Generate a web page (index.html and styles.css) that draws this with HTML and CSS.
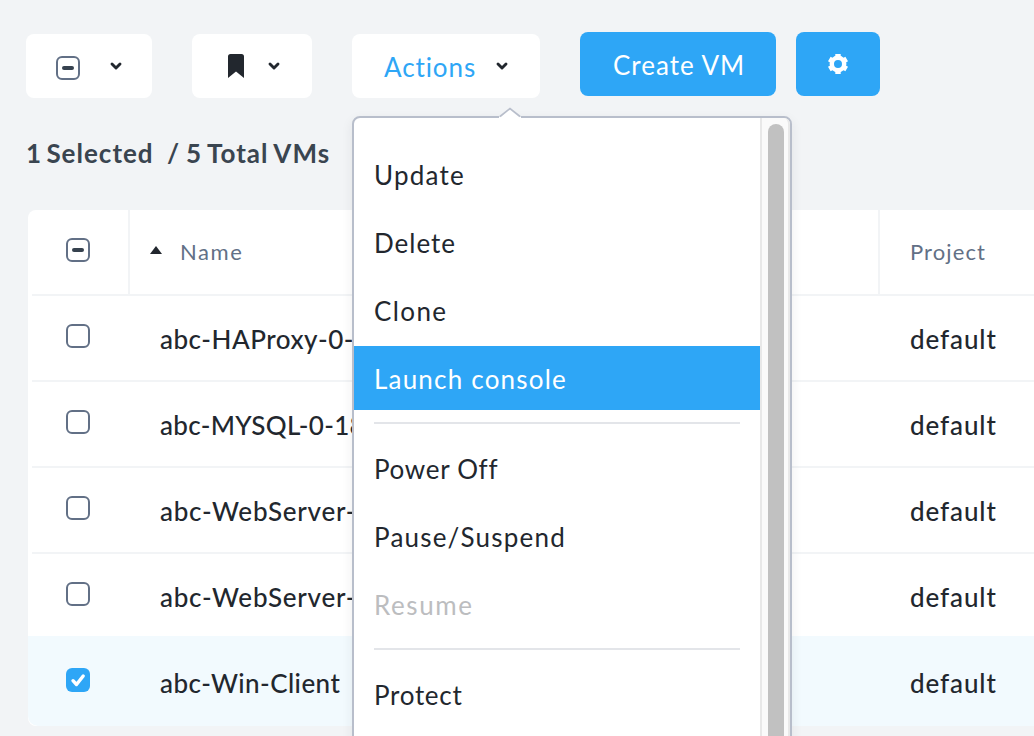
FILE: index.html
```html
<!DOCTYPE html>
<html lang="en">
<head>
<meta charset="utf-8">
<title>VMs</title>
<link rel="stylesheet" href="styles.css">
</head>
<body>
<main class="page">
  <div class="toolbar">
    <button class="btn btn-select"><span class="checkbox mixed"></span><svg class="chevron" viewBox="0 0 14 10"><path d="M3 3l4 4 4-4"/></svg></button>
    <button class="btn btn-bookmark"><svg class="bookmark" viewBox="0 0 16 24"><path d="M2.500 0h11a2.500 2.500 0 0 1 2.500 2.500V24l-8-6.500L0 24V2.500A2.500 2.500 0 0 1 2.500 0z"/></svg><svg class="chevron" viewBox="0 0 14 10"><path d="M3 3l4 4 4-4"/></svg></button>
    <div class="dropdown">
      <button class="btn btn-actions"><span class="t-actions">Actions</span><svg class="chevron" viewBox="0 0 14 10"><path d="M3 3l4 4 4-4"/></svg></button>
      <div class="menu">
        <svg class="menu-arrow" viewBox="0 0 22 11"><path d="M0 9.500L1 9.500 11 1.500 21 9.500 22 9.500V11H0z" fill="#fff"/><path d="M1 9.500L11 1.500 21 9.500" fill="none" stroke="#b8becb" stroke-width="1.700"/></svg>
        <ul class="menu-list">
          <li class="item"><span class="t-update">Update</span></li>
          <li class="item"><span class="t-delete">Delete</span></li>
          <li class="item"><span class="t-clone">Clone</span></li>
          <li class="item active"><span class="t-launch">Launch console</span></li>
          <li class="separator"></li>
          <li class="item"><span class="t-power">Power Off</span></li>
          <li class="item"><span class="t-pause">Pause/Suspend</span></li>
          <li class="item disabled"><span class="t-resume">Resume</span></li>
          <li class="separator"></li>
          <li class="item"><span class="t-protect">Protect</span></li>
        </ul>
        <div class="track"><div class="thumb"></div></div>
      </div>
    </div>
    <button class="btn primary btn-create"><span class="t-create">Create VM</span></button>
    <button class="btn primary btn-gear"><svg class="gear" viewBox="-10 -10 20 20"><circle r="6.200" fill="none" stroke="#fff" stroke-width="4.400"/><g stroke="#fff" stroke-width="5.400"><path d="M0-10V-6M0 10V6M-8.700-5l3.500 2M8.700-5l-3.500 2M-8.700 5l3.500-2M8.700 5l-3.500-2"/></g></svg></button>
  </div>
  <div class="summary"><span class="t-selected">1 Selected</span><span class="t-total">/ 5 Total VMs</span></div>
  <div class="table">
    <div class="row head">
      <div class="cell check"><span class="checkbox mixed"></span></div>
      <div class="cell name"><svg class="sort" viewBox="0 0 12 8"><path d="M6 0l6 8H0z"/></svg><span class="t-name">Name</span></div>
      <div class="cell project"><span class="t-project">Project</span></div>
    </div>
    <div class="row"><div class="cell check"><span class="checkbox"></span></div><div class="cell name"><span class="t-vm1">abc-HAProxy-0-</span></div><div class="cell project"><span class="t-default">default</span></div></div>
    <div class="row"><div class="cell check"><span class="checkbox"></span></div><div class="cell name"><span class="t-vm2">abc-MYSQL-0-18</span></div><div class="cell project"><span class="t-default">default</span></div></div>
    <div class="row"><div class="cell check"><span class="checkbox"></span></div><div class="cell name"><span class="t-vm3">abc-WebServer-</span></div><div class="cell project"><span class="t-default">default</span></div></div>
    <div class="row last-plain"><div class="cell check"><span class="checkbox"></span></div><div class="cell name"><span class="t-vm3">abc-WebServer-</span></div><div class="cell project"><span class="t-default">default</span></div></div>
    <div class="row selected"><div class="cell check"><span class="checkbox checked"><svg viewBox="0 0 24 24"><path d="M7 12.700l3.500 3.800 6.700-8.500"/></svg></span></div><div class="cell name"><span class="t-vm5">abc-Win-Client</span></div><div class="cell project"><span class="t-default">default</span></div></div>
  </div>
</main>
</body>
</html>
```
FILE: styles.css
```css
* { box-sizing: border-box; }
body {
  margin: 0;
  height: 736px;
  overflow: hidden;
  background: #f2f4f6;
  color: #22272e;
  font-family: Lato, "Open Sans", sans-serif;
  font-size: 26px;
  font-variant-ligatures: none;
}
.page { height: 736px; padding: 32px 0 0 26px; overflow: hidden; }
.toolbar { display: flex; align-items: flex-start; height: 66px; }
.btn {
  display: flex;
  align-items: center;
  height: 64px;
  margin: 2px 40px 0 0;
  padding: 0;
  border: 0;
  border-radius: 8px;
  background: #fff;
  color: #2ea6f6;
  font: inherit;
  white-space: nowrap;
}
.btn-select { width: 126px; padding-left: 30px; }
.btn-select .checkbox { margin-top: 4px; }
.btn-select .chevron { margin-left: 29px; }
.btn-bookmark { width: 120px; padding-left: 36px; }
.btn-bookmark .chevron { margin-left: 23px; }
.btn-actions { width: 188px; padding-left: 32px; }
.btn-actions span { width: 111px; padding-top: 2px; text-align: left; }
.primary { margin: 0 20px 0 0; background: #2ea6f6; color: #fff; }
.btn-create { width: 196px; padding: 2px 0 0 33px; }
.btn-gear { width: 84px; padding-left: 32px; }
.gear { width: 20px; height: 20px; }
.bookmark { width: 16px; height: 24px; fill: #22272e; }
.chevron { width: 14px; height: 10px; fill: none; stroke: #22272e; stroke-width: 2.900; stroke-linecap: round; stroke-linejoin: round; }
.checkbox {
  display: block;
  flex: none;
  width: 24px;
  height: 24px;
  border: 2px solid #627086;
  border-radius: 6px;
}
.mixed { padding: 8px 4px; }
.mixed::before { content: ""; display: block; width: 12px; height: 4px; border-radius: 2px; background: #36424f; }
.checked { border: 0; background: #2ea6f6; }
.checked svg { display: block; fill: none; stroke: #fff; stroke-width: 3.400; stroke-linecap: round; stroke-linejoin: round; }

.dropdown { position: relative; }
.menu {
  position: absolute;
  z-index: 2;
  top: 84px;
  left: 0;
  display: flex;
  width: 440px;
  height: 700px;
  border: 2px solid #b8becb;
  border-radius: 8px;
  background: #fff;
  box-shadow: 0 4px 12px rgba(34, 39, 46, .08);
}
.menu-arrow { position: absolute; left: 145px; top: -11px; width: 22px; height: 11px; }
.menu-list { flex: none; width: 406px; margin: 0; padding: 24px 0 0; list-style: none; }
.item { height: 64px; padding-left: 20px; line-height: 66px; white-space: nowrap; }
.item + .item { margin-top: 4px; }
.active { background: #2ea6f6; color: #fff; }
.disabled { color: #bcbdbf; }
.separator { height: 2px; margin: 12px 20px; background: #e3e5e9; }
.track { width: 30px; padding: 6px 0 0 6px; border: solid #e8e8e8; border-width: 0 2px; border-radius: 0 6px 0 0; background: #fafafa; }
.thumb { width: 16px; height: 690px; border-radius: 8px; background: #c1c1c1; }

.summary { display: flex; height: 112px; padding-top: 38px; color: #3a4550; font-weight: 700; line-height: 34px; white-space: pre; }
.table { width: 1006px; height: 516px; margin-left: 2px; border-radius: 8px 0 0 8px; background: #fff; overflow: hidden; }
.row {
  display: grid;
  grid-template-columns: 100px 750px 156px;
  height: 86px;
  line-height: 86px;
  font-weight: 500;
  background: linear-gradient(#f2f4f6, #f2f4f6) 4px 84px / 1006px 2px no-repeat;
}
.cell { display: flex; white-space: nowrap; }
.check { padding: 28px 0 0 38px; }
.name { padding-left: 32px; }
.project { padding-left: 32px; }
.head { color: #627086; font-size: 22px; font-weight: 400; line-height: 84px; }
.head .cell { height: 84px; }
.head .name, .head .project { border-left: 2px solid #f2f4f6; }
.head .name { padding-left: 20px; }
.head .project { padding-left: 30px; }
.sort { width: 12px; height: 8px; margin: 36px 18px 0 0; fill: #22272e; }
.last-plain { height: 82px; background: none; }
.selected { height: 90px; padding-top: 4px; border-radius: 0 0 0 10px; background: #f2fafe; }

/* Label tracking */
.t-actions { letter-spacing: .9px; }
.t-create { letter-spacing: 1px; }
.t-update { letter-spacing: 1.200px; }
.t-delete { letter-spacing: 1px; }
.t-clone { letter-spacing: 1.400px; }
.t-launch { letter-spacing: 1.200px; }
.t-power { letter-spacing: .7px; }
.t-pause { letter-spacing: 1.200px; }
.t-resume { letter-spacing: 1.600px; }
.t-protect { letter-spacing: .7px; }
.t-selected { width: 141px; letter-spacing: 1px; word-spacing: -3px; }
.t-total { letter-spacing: 1px; word-spacing: -1.500px; }
.t-name { letter-spacing: 1.600px; }
.t-project { letter-spacing: 1.100px; }
.t-vm1 { letter-spacing: .5px; }
.t-vm2 { letter-spacing: .3px; }
.t-vm3 { letter-spacing: .75px; }
.t-vm5 { letter-spacing: .45px; }
.t-default { letter-spacing: .9px; }
```
